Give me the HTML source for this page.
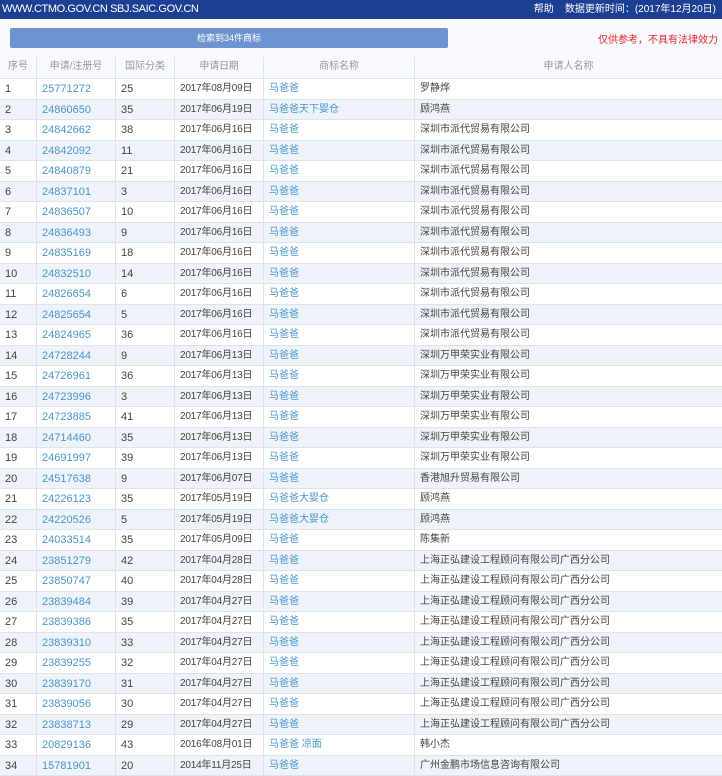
<!DOCTYPE html>
<html><head><meta charset="utf-8"><style>
*{margin:0;padding:0;box-sizing:border-box}
body{width:722px;height:776px;overflow:hidden;background:#f7f9fc;font-family:"Liberation Sans","Noto Sans CJK SC",sans-serif;font-size:11px;color:#444}
.top{position:absolute;left:0;top:0;width:722px;height:19px;background:#1c3f93;color:#fff;font-size:11px;line-height:19px}
.top .l{position:absolute;left:2px;letter-spacing:-0.4px}
.top .r{position:absolute;right:6px;font-size:10px}
.btn{position:absolute;left:10px;top:28px;width:438px;height:20px;background:#6d94d0;border-radius:2px;color:#fff;font-size:9px;text-align:center;line-height:20px}
.warn{position:absolute;left:598px;top:31px;color:#e8262b;font-size:10px;white-space:nowrap}
.r0{position:absolute;left:0;width:722px;display:flex;border-bottom:1px solid #dde3ec;height:20.5px;line-height:20px;white-space:nowrap}
.r0 div{border-right:1px solid #dde3ec;overflow:hidden;padding-left:5px}
.c1{width:37px}.c2{width:79px;color:#4a96cc}.c3{width:59px}.c4{width:89px;font-size:10px;letter-spacing:-0.2px}.c5{width:151px;color:#4a96cc;font-size:10px}.c6{width:307px;font-size:10px;border-right:none!important}
.hd{top:57px;height:22px;color:#999;font-size:10px;background:#f7f9fc}
.hd div{text-align:center;padding-left:0}
.odd{background:#fff}.even{background:#eef3fa}
</style></head><body>
<div class="top"><span class="l">WWW.CTMO.GOV.CN SBJ.SAIC.GOV.CN</span><span class="r">帮助&nbsp;&nbsp;&nbsp;&nbsp;数据更新时间：(2017年12月20日)</span></div>
<div class="btn">检索到34件商标</div>
<div class="warn">仅供参考，不具有法律效力</div>
<div class="r0 hd"><div class="c1">序号</div><div class="c2" style="color:#999">申请/注册号</div><div class="c3">国际分类</div><div class="c4">申请日期</div><div class="c5" style="color:#999">商标名称</div><div class="c6">申请人名称</div></div>
<div id="rows"></div>
<script>
var d=[["25771272",25,"2017年08月09日","马爸爸","罗静烨"],["24860650",35,"2017年06月19日","马爸爸天下婴仓","顾鸿燕"],
["24842662",38,"2017年06月16日","马爸爸","深圳市派代贸易有限公司"],["24842092",11,"2017年06月16日","马爸爸","深圳市派代贸易有限公司"],
["24840879",21,"2017年06月16日","马爸爸","深圳市派代贸易有限公司"],["24837101",3,"2017年06月16日","马爸爸","深圳市派代贸易有限公司"],
["24836507",10,"2017年06月16日","马爸爸","深圳市派代贸易有限公司"],["24836493",9,"2017年06月16日","马爸爸","深圳市派代贸易有限公司"],
["24835169",18,"2017年06月16日","马爸爸","深圳市派代贸易有限公司"],["24832510",14,"2017年06月16日","马爸爸","深圳市派代贸易有限公司"],
["24826654",6,"2017年06月16日","马爸爸","深圳市派代贸易有限公司"],["24825654",5,"2017年06月16日","马爸爸","深圳市派代贸易有限公司"],
["24824965",36,"2017年06月16日","马爸爸","深圳市派代贸易有限公司"],["24728244",9,"2017年06月13日","马爸爸","深圳万甲荣实业有限公司"],
["24726961",36,"2017年06月13日","马爸爸","深圳万甲荣实业有限公司"],["24723996",3,"2017年06月13日","马爸爸","深圳万甲荣实业有限公司"],
["24723885",41,"2017年06月13日","马爸爸","深圳万甲荣实业有限公司"],["24714460",35,"2017年06月13日","马爸爸","深圳万甲荣实业有限公司"],
["24691997",39,"2017年06月13日","马爸爸","深圳万甲荣实业有限公司"],["24517638",9,"2017年06月07日","马爸爸","香港旭升贸易有限公司"],
["24226123",35,"2017年05月19日","马爸爸大婴仓","顾鸿燕"],["24220526",5,"2017年05月19日","马爸爸大婴仓","顾鸿燕"],
["24033514",35,"2017年05月09日","马爸爸","陈集新"],["23851279",42,"2017年04月28日","马爸爸","上海正弘建设工程顾问有限公司广西分公司"],
["23850747",40,"2017年04月28日","马爸爸","上海正弘建设工程顾问有限公司广西分公司"],["23839484",39,"2017年04月27日","马爸爸","上海正弘建设工程顾问有限公司广西分公司"],
["23839386",35,"2017年04月27日","马爸爸","上海正弘建设工程顾问有限公司广西分公司"],["23839310",33,"2017年04月27日","马爸爸","上海正弘建设工程顾问有限公司广西分公司"],
["23839255",32,"2017年04月27日","马爸爸","上海正弘建设工程顾问有限公司广西分公司"],["23839170",31,"2017年04月27日","马爸爸","上海正弘建设工程顾问有限公司广西分公司"],
["23839056",30,"2017年04月27日","马爸爸","上海正弘建设工程顾问有限公司广西分公司"],["23838713",29,"2017年04月27日","马爸爸","上海正弘建设工程顾问有限公司广西分公司"],
["20829136",43,"2016年08月01日","马爸爸 凉面","韩小杰"],["15781901",20,"2014年11月25日","马爸爸","广州金鹏市场信息咨询有限公司"]];
var h="";d.forEach(function(r,i){h+='<div class="r0 '+(i%2?'even':'odd')+'" style="top:'+(79+i*20.5)+'px"><div class="c1">'+(i+1)+'</div><div class="c2">'+r[0]+'</div><div class="c3">'+r[1]+'</div><div class="c4">'+r[2]+'</div><div class="c5">'+r[3]+'</div><div class="c6">'+r[4]+'</div></div>';});
document.getElementById("rows").innerHTML=h;
</script>
</body></html>
